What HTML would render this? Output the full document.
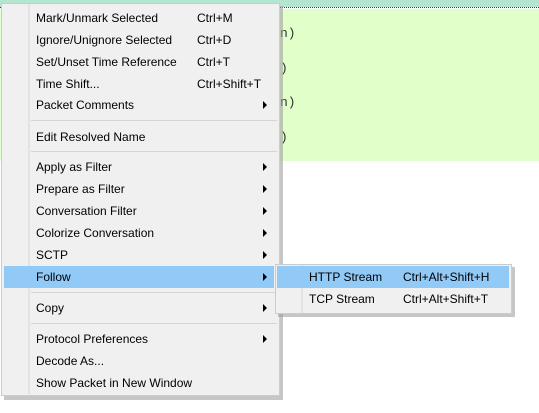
<!DOCTYPE html><html><head><style>
body{margin:0;width:539px;height:413px;position:relative;overflow:hidden;background:#fff;font-family:"Liberation Sans",sans-serif;font-size:12px;color:#000}
.a{position:absolute}
.it{position:absolute;left:36px;height:22px;line-height:22px;white-space:nowrap}
.sc{position:absolute;left:161px}
.ar{position:absolute;left:227px;top:7px;width:0;height:0;border-left:4px solid #000;border-top:4px solid transparent;border-bottom:4px solid transparent}
.sep{position:absolute;left:31px;width:246px;height:1px;background:#d5d5d5}
</style></head><body>
<div class="a" style="left:0;top:0;width:539px;height:7px;background:#b3e5d1"></div>
<div class="a" style="left:0;top:7px;width:539px;height:1px;border-top:1px dotted #1a3d9a"></div>
<div class="a" style="left:0;top:9px;width:539px;height:152px;background:#e1ffc8"></div>
<div class="a" style="left:280px;top:26px;font-family:'Liberation Mono',monospace;font-size:13px;color:#333">n)</div>
<div class="a" style="left:280px;top:61px;font-family:'Liberation Mono',monospace;font-size:13px;color:#333">)</div>
<div class="a" style="left:280px;top:95px;font-family:'Liberation Mono',monospace;font-size:13px;color:#333">n)</div>
<div class="a" style="left:280px;top:130px;font-family:'Liberation Mono',monospace;font-size:13px;color:#333">)</div>
<div class="a" style="left:4px;top:6px;width:279px;height:394px;background:#a0a0a0;opacity:.6"></div>
<div class="a" style="left:1px;top:3px;width:279px;height:393px;background:#f0f0f0;border:1px solid #ccc;box-sizing:border-box"></div>
<div class="a" style="left:28px;top:4px;width:2px;height:390px;background:#e3e3e3"></div>
<div class="a" style="left:4px;top:266px;width:270px;height:22px;background:#91c9f7"></div>
<div class="it" style="top:7px">Mark/Unmark Selected<span class="sc">Ctrl+M</span></div>
<div class="it" style="top:29px">Ignore/Unignore Selected<span class="sc">Ctrl+D</span></div>
<div class="it" style="top:51px">Set/Unset Time Reference<span class="sc">Ctrl+T</span></div>
<div class="it" style="top:73px">Time Shift...<span class="sc">Ctrl+Shift+T</span></div>
<div class="it" style="top:94px">Packet Comments<span class="ar"></span></div>
<div class="sep" style="top:120px"></div>
<div class="it" style="top:126px">Edit Resolved Name</div>
<div class="sep" style="top:151px"></div>
<div class="it" style="top:156px">Apply as Filter<span class="ar"></span></div>
<div class="it" style="top:178px">Prepare as Filter<span class="ar"></span></div>
<div class="it" style="top:200px">Conversation Filter<span class="ar"></span></div>
<div class="it" style="top:222px">Colorize Conversation<span class="ar"></span></div>
<div class="it" style="top:244px">SCTP<span class="ar"></span></div>
<div class="it" style="top:266px">Follow<span class="ar"></span></div>
<div class="sep" style="top:292px"></div>
<div class="it" style="top:297px">Copy<span class="ar"></span></div>
<div class="sep" style="top:323px"></div>
<div class="it" style="top:328px">Protocol Preferences<span class="ar"></span></div>
<div class="it" style="top:350px">Decode As...</div>
<div class="it" style="top:372px">Show Packet in New Window</div>
<div class="a" style="left:278px;top:267px;width:237px;height:50px;background:#a0a0a0;opacity:.6"></div>
<div class="a" style="left:275px;top:264px;width:237px;height:50px;background:#f0f0f0;border:1px solid #ccc;box-sizing:border-box"></div>
<div class="a" style="left:301px;top:265px;width:2px;height:48px;background:#e3e3e3"></div>
<div class="a" style="left:277px;top:266px;width:232px;height:22px;background:#91c9f7"></div>
<div class="it" style="left:309px;top:266px">HTTP Stream<span class="a" style="left:94px">Ctrl+Alt+Shift+H</span></div>
<div class="it" style="left:309px;top:288px">TCP Stream<span class="a" style="left:94px">Ctrl+Alt+Shift+T</span></div>
</body></html>
